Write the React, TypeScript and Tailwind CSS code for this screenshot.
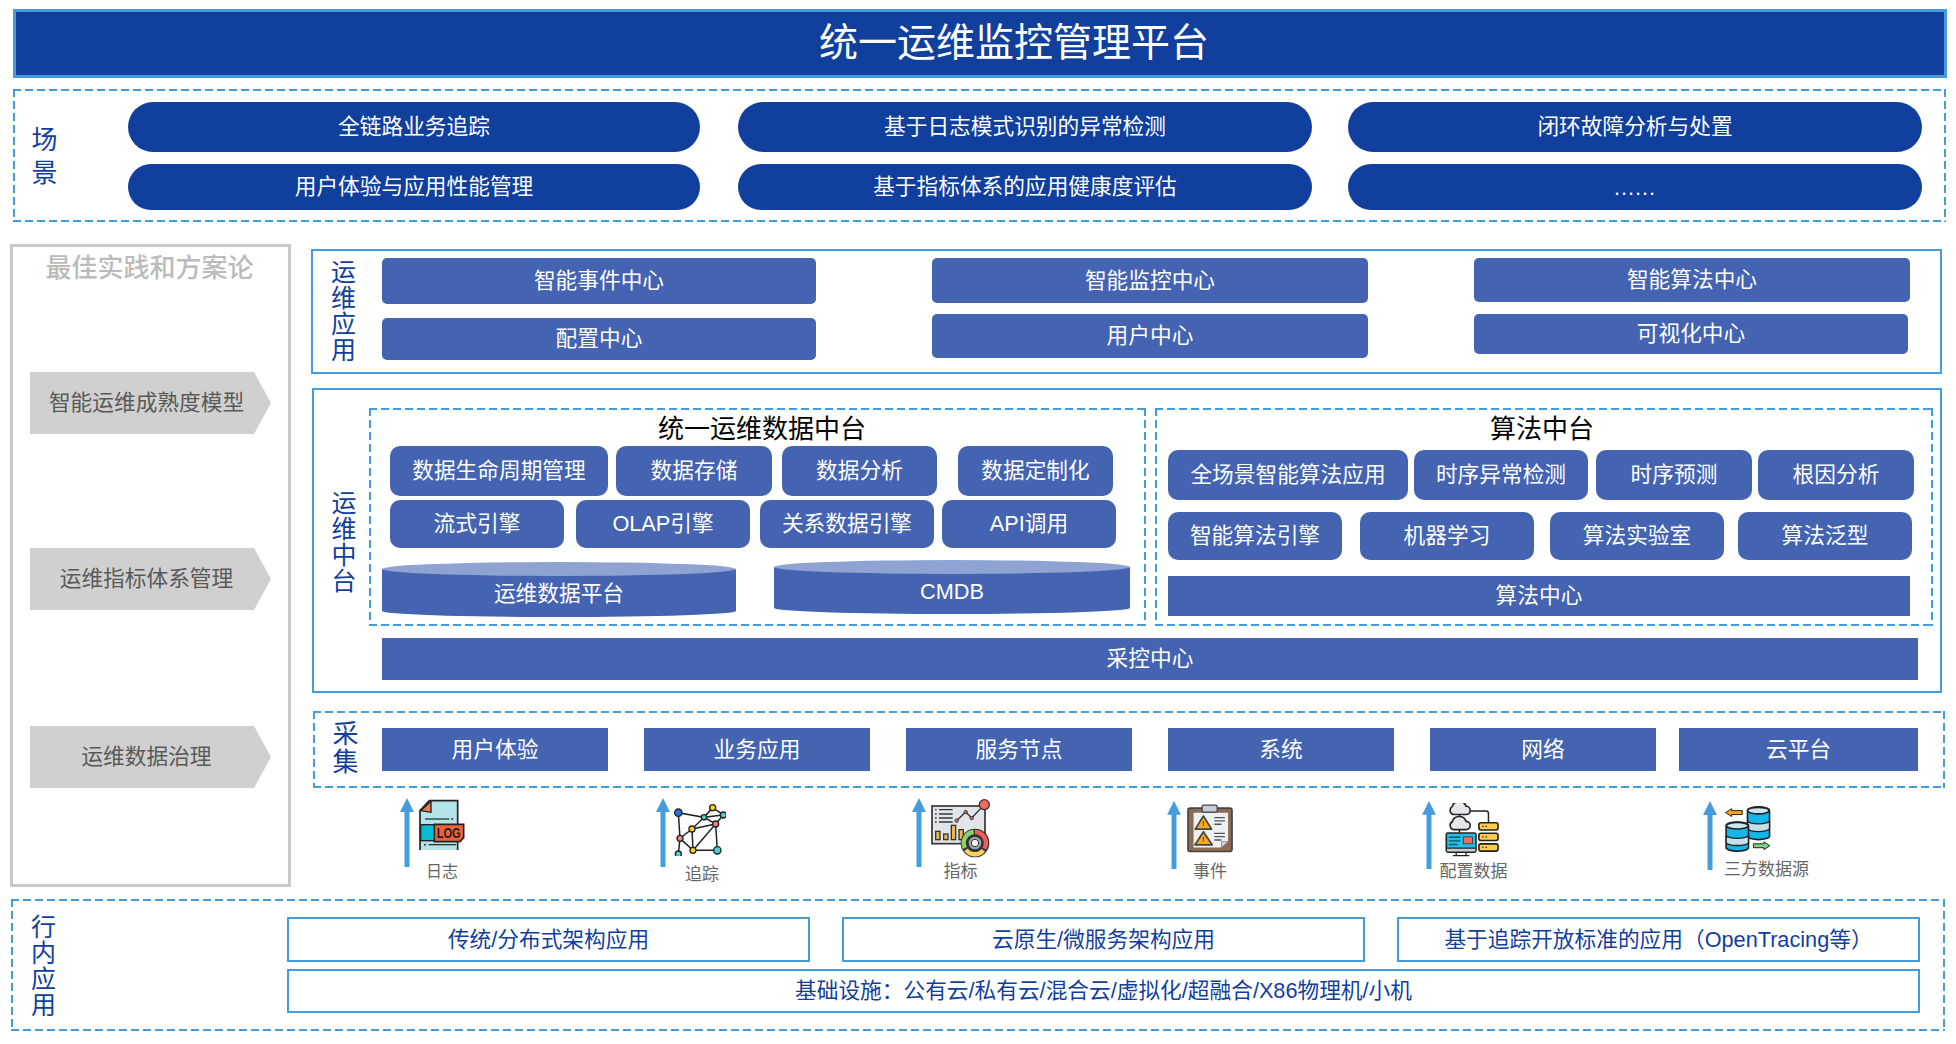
import React from "react";

// dash pattern of the diagram: 8 on, 4 off, drawn on the transparent border
const dashed =
  "border-2 border-transparent [background:repeating-linear-gradient(90deg,#449cdd_0_8px,transparent_8px_12px)_top/100%_2px_no-repeat_border-box,repeating-linear-gradient(90deg,#449cdd_0_8px,transparent_8px_12px)_bottom/100%_2px_no-repeat_border-box,repeating-linear-gradient(180deg,#449cdd_0_8px,transparent_8px_12px)_left/2px_100%_no-repeat_border-box,repeating-linear-gradient(180deg,#449cdd_0_8px,transparent_8px_12px)_right/2px_100%_no-repeat_border-box]";

const scenes = [
  ["全链路业务追踪", "用户体验与应用性能管理"],
  ["基于日志模式识别的异常检测", "基于指标体系的应用健康度评估"],
  ["闭环故障分析与处置", "......"],
];

function VLabel({ chars, className }: { chars: string; className: string }) {
  return (
    <div className={"flex flex-col items-center text-[#103f9e] " + className}>
      {chars.split("").map((c, i) => (
        <span key={i}>{c}</span>
      ))}
    </div>
  );
}

function Chip({ className, children }: { className: string; children: React.ReactNode }) {
  return (
    <div className={"flex shrink-0 items-center justify-center bg-[#4464b2] pt-px text-[21.7px] text-white " + className}>
      {children}
    </div>
  );
}

function Pentagon({ className, children }: { className: string; children: React.ReactNode }) {
  return (
    <div
      className={
        "flex h-[62px] w-[241px] items-center justify-center bg-[#d0d0d0] pr-[8px] pt-px text-[21.7px] text-[#595959] [clip-path:polygon(0_0,224px_0,100%_50%,224px_100%,0_100%)] " +
        className
      }
    >
      {children}
    </div>
  );
}

function Cylinder({ className, children }: { className: string; children: React.ReactNode }) {
  return (
    <div className={"relative shrink-0 " + className}>
      <div className="absolute inset-x-0 top-[7px] bottom-0 flex items-center justify-center bg-[#4464b2] pt-[3px] text-[21.7px] text-white [border-radius:0_0_50%_50%/0_0_6px_6px]">
        {children}
      </div>
      <div className="absolute inset-x-0 top-0 h-[14px] rounded-[50%] bg-[#8ea3d2]" />
    </div>
  );
}

function UpArrow() {
  return (
    <svg viewBox="0 0 14 69" className="h-full w-[14px] shrink-0">
      <path d="M7 0 L14 14 H9.5 V69 H4.5 V14 H0 Z" fill="#449cdd" />
    </svg>
  );
}

function LogIcon() {
  return (
    <svg viewBox="118 60 136 150" className="h-[50px] w-[46px] overflow-visible">
      <path d="M120 210 V92 L148 62 H233 V210" fill="#b2e4ea" stroke="#222" strokeWidth="5" />
      <path d="M122 92 L153 64 V97 Z" fill="#f47a50" stroke="#222" strokeWidth="4" />
      <path d="M135 117 H208" stroke="#333" strokeWidth="4" />
      <circle cx="217" cy="117" r="3" fill="#333" />
      <rect x="122" y="134" width="42" height="48" fill="#06bccf" stroke="#222" strokeWidth="4" />
      <path d="M163 133 H251 V173 L240 185 H163 Z" fill="#f4603a" stroke="#222" strokeWidth="5" />
      <text x="206" y="175" textAnchor="middle" fontFamily="Liberation Sans" fontWeight="700" fontSize="42" fill="#222" textLength="72" lengthAdjust="spacingAndGlyphs">
        LOG
      </text>
      <path d="M236 187 L244 187 L236 196 Z" fill="#f2c14e" />
      <circle cx="135" cy="194" r="3" fill="#333" />
      <path d="M146 194 H228" stroke="#333" strokeWidth="4" />
    </svg>
  );
}

function TraceIcon() {
  const nodes: [number, number, number, string][] = [
    [895, 98, 11, "#2f6fd6"],
    [998, 83, 9, "#ffd21f"],
    [972, 112, 8, "#4fd0d8"],
    [1030, 105, 9, "#4fd0d8"],
    [1007, 132, 9, "#f77f7f"],
    [936, 147, 9, "#ffd21f"],
    [900, 175, 9, "#f77f7f"],
    [939, 211, 9, "#ffd21f"],
    [1012, 211, 11, "#4fd0d8"],
    [895, 222, 9, "#4fd0d8"],
  ];
  return (
    <svg viewBox="882 72 156 156" className="h-[52px] w-[52px]">
      <path
        d="M895 98 L972 112 L998 83 L1030 105 L1007 132 L972 112 L936 147 L900 175 L895 98 M972 112 L1030 105 M936 147 L1007 132 L939 211 L936 147 M900 175 L939 211 L1012 211 L1007 132 M900 175 L895 222"
        fill="none"
        stroke="#222"
        strokeWidth="4.5"
      />
      {nodes.map(([x, y, r, c], i) => (
        <circle key={i} cx={x} cy={y} r={r} fill={c} stroke="#222" strokeWidth="4" />
      ))}
    </svg>
  );
}

function MetricIcon() {
  return (
    <svg viewBox="93 58 177 177" className="h-[59px] w-[59px]">
      <rect x="96" y="79" width="159" height="113" fill="#e1e5ea" stroke="#333" strokeWidth="5" />
      <path d="M105 90 H110 M117 90 H158 M105 103 H110 M117 103 H158 M105 115 H110 M117 115 H158 M105 127 H110 M117 127 H158" stroke="#333" strokeWidth="4" />
      <path d="M170 123 L197 97 L215 115 L250 78" fill="none" stroke="#333" strokeWidth="4" />
      <circle cx="170" cy="123" r="5" fill="#f56a5f" stroke="#333" strokeWidth="3" />
      <circle cx="197" cy="97" r="5" fill="#f56a5f" stroke="#333" strokeWidth="3" />
      <circle cx="215" cy="115" r="5" fill="#f56a5f" stroke="#333" strokeWidth="3" />
      <circle cx="253" cy="75" r="15" fill="#f56a5f" stroke="#333" strokeWidth="4" />
      <rect x="107" y="155" width="13" height="25" fill="#e9b949" stroke="#333" strokeWidth="4" />
      <rect x="131" y="163" width="13" height="17" fill="#e9b949" stroke="#333" strokeWidth="4" />
      <rect x="154" y="137" width="13" height="43" fill="#e9b949" stroke="#333" strokeWidth="4" />
      <rect x="177" y="150" width="13" height="30" fill="#e9b949" stroke="#333" strokeWidth="4" />
      <circle cx="225" cy="190" r="43" fill="#333" />
      <path d="M225 157 A33 33 0 0 1 253 207" fill="none" stroke="#f0605a" strokeWidth="13" />
      <path d="M250 212 A33 33 0 0 1 198 210" fill="none" stroke="#ffd257" strokeWidth="13" />
      <path d="M195 205 A33 33 0 0 1 221 157" fill="none" stroke="#8fd16a" strokeWidth="13" />
      <circle cx="225" cy="190" r="21" fill="#9ea4ac" stroke="#333" strokeWidth="4" />
      <circle cx="225" cy="190" r="11" fill="#fff" stroke="#333" strokeWidth="3" />
    </svg>
  );
}

function EventIcon() {
  return (
    <svg viewBox="860 72 140 146" className="h-[49px] w-[46px]">
      <rect x="863" y="83" width="134" height="132" rx="7" fill="#8b6b55" stroke="#444" strokeWidth="5" />
      <path d="M880 97 H985 V185 L965 203 H880 Z" fill="#eef1f4" />
      <path d="M965 203 V185 H985 Z" fill="#d5d9de" stroke="#666" strokeWidth="2" />
      <rect x="906" y="74" width="46" height="21" rx="5" fill="#c5cbdc" stroke="#444" strokeWidth="4" />
      <path d="M910 107 L935 147 H885 Z" fill="#f5a623" stroke="#444" strokeWidth="5" strokeLinejoin="round" />
      <path d="M910 155 L937 195 H884 Z" fill="#f5a623" stroke="#444" strokeWidth="5" strokeLinejoin="round" />
      <path d="M910 122 V136 M910 170 V184" stroke="#444" strokeWidth="3" />
      <path d="M943 112 H975 M943 122 H975 M943 132 H965 M943 160 H975 M943 170 H975 M943 180 H965" stroke="#555" strokeWidth="4" />
    </svg>
  );
}

function ConfigIcon() {
  return (
    <svg viewBox="135 68 162 164" className="h-[54px] w-[54px]">
      <path d="M178 104 V120 M178 148 V160 M206 92 H258 Q266 92 266 100 V128" fill="none" stroke="#222" strokeWidth="4.5" />
      <path d="M160 103 A13 13 0 0 1 156 79 A22 22 0 0 1 198 78 A12 12 0 0 1 198 103 Z" fill="#e3e6ea" stroke="#222" strokeWidth="5" />
      <path d="M160 149 A13 13 0 0 1 156 125 A22 22 0 0 1 198 124 A12 12 0 0 1 198 149 Z" fill="#e3e6ea" stroke="#222" strokeWidth="5" />
      <rect x="138" y="159" width="90" height="58" rx="5" fill="#1fc0e8" stroke="#222" strokeWidth="5" />
      <path d="M140 205 H226 V215 H140 Z" fill="#c7ccd2" />
      <path d="M138 205 H228 M168 218 V226 M198 218 V226 M158 228 H208" stroke="#222" strokeWidth="4" />
      <path d="M146 172 H180 M146 183 H180 M146 194 H172" stroke="#12506b" strokeWidth="4" />
      <rect x="190" y="171" width="28" height="21" fill="#f56a5f" stroke="#222" strokeWidth="2" />
      {[128, 160, 192].map((y) => (
        <g key={y}>
          <rect x="237" y={y} width="58" height="22" rx="6" fill="#ffcb4d" stroke="#222" strokeWidth="5" />
          <path d={`M247 ${y + 11} H251 M257 ${y + 11} H261`} stroke="#222" strokeWidth="4" />
        </g>
      ))}
    </svg>
  );
}

function DbIcon() {
  return (
    <svg viewBox="972 78 140 140" className="h-[46px] w-[47px]">
      <path d="M975 98 L994 86 V92 H1026 V104 H994 V110 Z" fill="#f5a623" stroke="#222" strokeWidth="3" strokeLinejoin="round" />
      <path d="M1042 92 A33 11 0 0 1 1109 92 V170 A33 10 0 0 1 1042 170 Z" fill="#13b5ea" stroke="#222" strokeWidth="5" />
      <path d="M1042 122 A33 10 0 0 0 1109 122 V146 A33 10 0 0 1 1042 146 Z" fill="#c9dfe8" stroke="#222" strokeWidth="4" />
      <ellipse cx="1075" cy="92" rx="33" ry="10" fill="#c9e6f0" stroke="#222" strokeWidth="5" />
      <path d="M977 138 A33 11 0 0 1 1045 138 V205 A33 10 0 0 1 977 205 Z" fill="#13b5ea" stroke="#222" strokeWidth="5" />
      <path d="M977 166 A33 10 0 0 0 1045 166 V188 A33 10 0 0 1 977 188 Z" fill="#c9dfe8" stroke="#222" strokeWidth="4" />
      <ellipse cx="1011" cy="138" rx="33" ry="10" fill="#c9e6f0" stroke="#222" strokeWidth="5" />
      <path d="M1110 199 L1092 187 V193 H1060 V205 H1092 V211 Z" fill="#7ed67e" stroke="#222" strokeWidth="3" strokeLinejoin="round" />
    </svg>
  );
}

const sources = [
  { arrow: "ml-[89px] mt-[10px] h-[69px]", col: "ml-[5px] w-[46px] mt-[12px]", label: "mt-[12px] text-[16px]", icon: <LogIcon />, name: "日志" },
  { arrow: "ml-[191px] mt-[10px] h-[69px]", col: "ml-[4px] w-[52px] mt-[16px]", label: "mt-[9px] ml-[4px] text-[17px]", icon: <TraceIcon />, name: "追踪" },
  { arrow: "ml-[186px] mt-[10px] h-[69px]", col: "ml-[5px] w-[59px] mt-[11px]", label: "mt-[4px] text-[17px]", icon: <MetricIcon />, name: "指标" },
  { arrow: "ml-[177px] mt-[13px] h-[68px]", col: "ml-[6px] w-[46px] mt-[16px]", label: "mt-[9px] text-[17px]", icon: <EventIcon />, name: "事件" },
  { arrow: "ml-[189px] mt-[13px] h-[68px]", col: "ml-[9px] w-[54px] mt-[15px]", label: "mt-[5px] ml-[3px] text-[17px]", icon: <ConfigIcon />, name: "配置数据" },
  { arrow: "ml-[204px] mt-[13px] h-[69px]", col: "ml-[7px] w-[47px] mt-[18px]", label: "mt-[8px] self-start text-[17px]", icon: <DbIcon />, name: "三方数据源" },
];

export default function App() {
  return (
    <div className="h-[1044px] w-[1956px] overflow-hidden bg-white pt-[9px] font-['Liberation_Sans','Noto_Sans_CJK_SC',sans-serif]">
      {/* title */}
      <div className="ml-[13px] flex h-[69px] w-[1934px] items-center justify-center border-[3px] border-[#449cdd] bg-[#103f9e] pl-[68px] text-[39px] text-white">
        统一运维监控管理平台
      </div>

      {/* scenes */}
      <div className={"ml-[13px] mt-[11px] flex h-[133px] w-[1933px] pl-[17px] " + dashed}>
        <VLabel chars="场景" className="mt-[33px] h-fit w-[25px] text-[26px] leading-[33px]" />
        {scenes.map((col, i) => (
          <div key={i} className={i === 0 ? "ml-[71px] flex w-[572px] flex-col pt-[11px]" : i === 1 ? "ml-[38px] flex w-[574px] flex-col pt-[11px]" : "ml-[36px] flex w-[574px] flex-col pt-[11px]"}>
            <div className="flex h-[50px] items-center justify-center rounded-full bg-[#103f9e] pt-px text-[21.7px] text-white">{col[0]}</div>
            <div className={col[1] === "......" ? "mt-[12px] flex h-[46px] items-center justify-center rounded-full bg-[#103f9e] pt-[3px] text-[21.7px] tracking-[1px] text-white" : "mt-[12px] flex h-[46px] items-center justify-center rounded-full bg-[#103f9e] pt-px text-[21.7px] text-white"}>{col[1]}</div>
          </div>
        ))}
      </div>

      <div className="mt-[22px] flex">
        {/* best practices */}
        <div className="ml-[10px] flex h-[643px] w-[281px] shrink-0 flex-col border-[3px] border-[#c8c8c8]">
          <div className="pr-[2px] text-center text-[26px] font-medium leading-[42px] text-[#bbbbbb]">最佳实践和方案论</div>
          <Pentagon className="ml-[17px] mt-[83px]">智能运维成熟度模型</Pentagon>
          <Pentagon className="ml-[17px] mt-[114px]">运维指标体系管理</Pentagon>
          <Pentagon className="ml-[17px] mt-[116px]">运维数据治理</Pentagon>
        </div>

        <div className="ml-[20px] mt-[5px] flex flex-col">
          {/* ops apps */}
          <div className="flex h-[125px] w-[1631px] border-2 border-[#449cdd] pl-[18px]">
            <VLabel chars="运维应用" className="mt-[8px] h-fit w-[25px] text-[25px] leading-[26px]" />
            <div className="ml-[26px] flex w-[434px] flex-col pt-[7px]">
              <Chip className="h-[46px] rounded-[5px]">智能事件中心</Chip>
              <Chip className="mt-[14px] h-[42px] rounded-[5px]">配置中心</Chip>
            </div>
            <div className="ml-[116px] flex w-[436px] flex-col pt-[7px]">
              <Chip className="h-[45px] rounded-[5px]">智能监控中心</Chip>
              <Chip className="mt-[11px] h-[44px] rounded-[5px]">用户中心</Chip>
            </div>
            <div className="ml-[106px] flex w-[436px] flex-col pt-[7px]">
              <Chip className="h-[44px] rounded-[5px]">智能算法中心</Chip>
              <Chip className="mt-[12px] h-[40px] w-[434px] rounded-[5px]">可视化中心</Chip>
            </div>
          </div>

          {/* ops middle platform */}
          <div className="ml-px mt-[14px] flex h-[305px] w-[1630px] border-2 border-[#449cdd] pl-[18px]">
            <VLabel chars="运维中台" className="mt-[100px] h-fit w-[24px] text-[25px] leading-[26px]" />
            <div className="ml-[13px] flex flex-col pt-[18px]">
              <div className="flex">
                <div className={"h-[218px] w-[777px] shrink-0 " + dashed}>
                  <div className="h-[36px] pl-[9px] pt-px text-center text-[26px] leading-[36px] text-black">统一运维数据中台</div>
                  <div className="flex pl-[19px]">
                    <Chip className="h-[50px] w-[218px] rounded-[10px]">数据生命周期管理</Chip>
                    <Chip className="ml-[8px] h-[50px] w-[156px] rounded-[10px]">数据存储</Chip>
                    <Chip className="ml-[10px] h-[50px] w-[155px] rounded-[10px]">数据分析</Chip>
                    <Chip className="ml-[21px] h-[50px] w-[155px] rounded-[10px]">数据定制化</Chip>
                  </div>
                  <div className="mt-[4px] flex pl-[19px]">
                    <Chip className="h-[48px] w-[174px] rounded-[10px]">流式引擎</Chip>
                    <Chip className="ml-[12px] h-[48px] w-[174px] rounded-[10px]">OLAP引擎</Chip>
                    <Chip className="ml-[10px] h-[48px] w-[174px] rounded-[10px]">关系数据引擎</Chip>
                    <Chip className="ml-[8px] h-[48px] w-[174px] rounded-[10px]">API调用</Chip>
                  </div>
                  <div className="mt-[14px] flex items-start pl-[11px]">
                    <Cylinder className="h-[55px] w-[354px]">运维数据平台</Cylinder>
                    <Cylinder className="-mt-[2px] ml-[38px] h-[54px] w-[356px]">CMDB</Cylinder>
                  </div>
                </div>
                <div className={"ml-[9px] h-[218px] w-[778px] shrink-0 " + dashed}>
                  <div className="h-[36px] pr-[4px] pt-px text-center text-[26px] leading-[36px] text-black">算法中台</div>
                  <div className="mt-[4px] flex pl-[11px]">
                    <Chip className="h-[50px] w-[240px] rounded-[10px]">全场景智能算法应用</Chip>
                    <Chip className="ml-[6px] h-[50px] w-[174px] rounded-[10px]">时序异常检测</Chip>
                    <Chip className="ml-[8px] h-[50px] w-[156px] rounded-[10px]">时序预测</Chip>
                    <Chip className="ml-[6px] h-[50px] w-[156px] rounded-[10px]">根因分析</Chip>
                  </div>
                  <div className="mt-[12px] flex pl-[11px]">
                    <Chip className="h-[48px] w-[174px] rounded-[10px]">智能算法引擎</Chip>
                    <Chip className="ml-[18px] h-[48px] w-[174px] rounded-[10px]">机器学习</Chip>
                    <Chip className="ml-[16px] h-[48px] w-[174px] rounded-[10px]">算法实验室</Chip>
                    <Chip className="ml-[14px] h-[48px] w-[174px] rounded-[10px]">算法泛型</Chip>
                  </div>
                  <Chip className="ml-[11px] mt-[16px] h-[40px] w-[742px]">算法中心</Chip>
                </div>
              </div>
              <Chip className="ml-[13px] mt-[12px] h-[42px] w-[1536px]">采控中心</Chip>
            </div>
          </div>

          {/* collection */}
          <div className={"ml-[2px] mt-[18px] flex h-[77px] w-[1632px] pl-[18px] " + dashed}>
            <VLabel chars="采集" className="mt-[7px] h-fit w-[25px] text-[26px] leading-[28px]" />
            <Chip className="ml-[24px] mt-[15px] h-[43px] w-[226px]">用户体验</Chip>
            <Chip className="ml-[36px] mt-[15px] h-[43px] w-[226px]">业务应用</Chip>
            <Chip className="ml-[36px] mt-[15px] h-[43px] w-[226px]">服务节点</Chip>
            <Chip className="ml-[36px] mt-[15px] h-[43px] w-[226px]">系统</Chip>
            <Chip className="ml-[36px] mt-[15px] h-[43px] w-[226px]">网络</Chip>
            <Chip className="ml-[23px] mt-[15px] h-[43px] w-[239px]">云平台</Chip>
          </div>

          {/* data sources */}
          <div className="flex h-[99px] items-start">
            {sources.map((s) => (
              <React.Fragment key={s.name}>
                <div className={"w-[14px] shrink-0 " + s.arrow}>
                  <UpArrow />
                </div>
                <div className={"flex shrink-0 flex-col items-center " + s.col}>
                  {s.icon}
                  <span className={"whitespace-nowrap leading-[20px] text-[#666] " + s.label}>{s.name}</span>
                </div>
              </React.Fragment>
            ))}
          </div>
        </div>
      </div>

      {/* in-house applications */}
      <div className={"ml-[11px] mt-[12px] flex h-[132px] w-[1934px] pl-[18px] " + dashed}>
        <VLabel chars="行内应用" className="mt-[13px] h-fit w-[25px] text-[25px] leading-[26px]" />
        <div className="ml-[231px] flex flex-col pt-[16px] text-[21.7px] text-[#103f9e]">
          <div className="flex">
            <div className="flex h-[45px] w-[523px] items-center justify-center border-2 border-[#449cdd] pt-px">传统/分布式架构应用</div>
            <div className="ml-[32px] flex h-[45px] w-[523px] items-center justify-center border-2 border-[#449cdd] pt-px">云原生/微服务架构应用</div>
            <div className="ml-[32px] flex h-[45px] w-[523px] items-center justify-center border-2 border-[#449cdd] pt-px">基于追踪开放标准的应用（OpenTracing等）</div>
          </div>
          <div className="mt-[7px] flex h-[44px] w-[1633px] items-center justify-center border-2 border-[#449cdd] pt-px">
            基础设施：公有云/私有云/混合云/虚拟化/超融合/X86物理机/小机
          </div>
        </div>
      </div>
    </div>
  );
}
